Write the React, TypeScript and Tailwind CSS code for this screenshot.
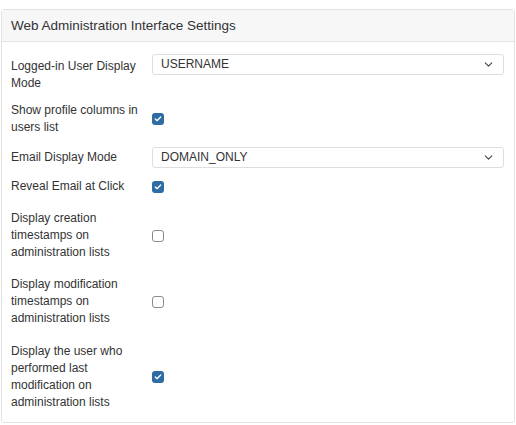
import { ChevronDown, Check } from "lucide-react";

type Row =
  | { kind: "select"; label: string; value: string; mt: string; align?: string }
  | { kind: "check"; label: string; checked: boolean; mt: string };

const rows: Row[] = [
  { kind: "select", label: "Logged-in User Display Mode", value: "USERNAME", mt: "mt-0", align: "items-start" },
  { kind: "check", label: "Show profile columns in users list", checked: true, mt: "mt-[10px]" },
  { kind: "select", label: "Email Display Mode", value: "DOMAIN_ONLY", mt: "mt-[11px]" },
  { kind: "check", label: "Reveal Email at Click", checked: true, mt: "mt-[10px]" },
  { kind: "check", label: "Display creation timestamps on administration lists", checked: false, mt: "mt-[15px]" },
  { kind: "check", label: "Display modification timestamps on administration lists", checked: false, mt: "mt-[15px]" },
  { kind: "check", label: "Display the user who performed last modification on administration lists", checked: true, mt: "mt-[16px]" },
];

function Checkbox({ checked }: { checked: boolean }) {
  return checked ? (
    <span className="flex h-[12px] w-[12px] items-center justify-center rounded-[3px] bg-[#2e6da4]">
      <Check className="h-[8px] w-[8px] text-white" strokeWidth={4} />
    </span>
  ) : (
    <span className="block h-[12px] w-[12px] rounded-[3px] border border-[#8a8a8a] bg-white" />
  );
}

export default function App() {
  return (
    <div className="bg-white pt-[9px] pl-[1px] pr-[1px] text-[12px] leading-[17px] text-[#333]" style={{ fontFamily: '"Liberation Sans", Arial, sans-serif' }}>
      <div className="h-[414px] rounded-[3px] border border-[#e3e3e3]">
        <div className="flex h-[32px] items-center border-b border-[#e3e3e3] bg-[#f7f7f8] px-[9px] text-[13.5px]">
          Web Administration Interface Settings
        </div>
        <div className="px-[9px] pt-[12px]">
          {rows.map((r) => (
            <div key={r.label} className={`flex ${r.kind === "select" && r.align ? r.align : "items-center"} ${r.mt}`}>
              <div className={`w-[141px] pr-[6px] ${r.kind === "select" && r.align ? "pt-[4px]" : ""}`}>{r.label}</div>
              {r.kind === "select" ? (
                <div className="flex h-[21px] w-[352px] items-center justify-between rounded-[3px] border border-[#dedede] pl-[8px] pr-[8px]">
                  <span>{r.value}</span>
                  <ChevronDown className="h-[13px] w-[13px] text-[#444]" strokeWidth={2} />
                </div>
              ) : (
                <Checkbox checked={r.checked} />
              )}
            </div>
          ))}
        </div>
      </div>
    </div>
  );
}
